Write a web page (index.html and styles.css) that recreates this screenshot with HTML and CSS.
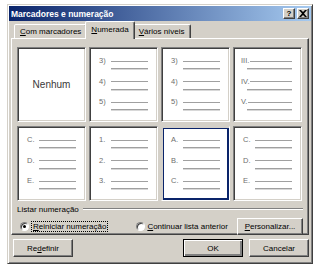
FILE: index.html
```html
<!DOCTYPE html>
<html lang="pt">
<head>
  <meta charset="UTF-8" />
  <title>Marcadores e numeração</title>
  <link rel="stylesheet" href="styles.css">
</head>
<body>

<div class="dialog">
  <div class="titlebar">
    <span class="title">Marcadores e numeração</span>
    <div class="tbtns">
      <span class="tbtn">?</span>
      <span class="tbtn">
        <svg width="8" height="7" viewBox="0 0 8 7"><path d="M0 0h2l2 2 2-2h2L5 3.5 8 7H6L4 5 2 7H0l3-3.5z" fill="#000"/></svg>
      </span>
    </div>
  </div>

  <div class="content">
    <div class="tabs">
      <div class="tab tab-first"><u>C</u>om marcadores</div>
      <div class="tab active"><u>N</u>umerada</div>
      <div class="tab"><u>V</u>ários níveis</div>
    </div>

    <div class="panel">
      <div class="grid">
        <div class="preview none">Nenhum</div>

        <div class="preview">
          <div class="item"><div class="r1"><span class="num">3)</span><span class="ln"></span></div><div class="ln2"></div></div>
          <div class="item"><div class="r1"><span class="num">4)</span><span class="ln"></span></div><div class="ln2"></div></div>
          <div class="item"><div class="r1"><span class="num">5)</span><span class="ln"></span></div><div class="ln2"></div></div>
        </div>

        <div class="preview">
          <div class="item"><div class="r1"><span class="num">3)</span><span class="ln"></span></div><div class="ln2"></div></div>
          <div class="item"><div class="r1"><span class="num">4)</span><span class="ln"></span></div><div class="ln2"></div></div>
          <div class="item"><div class="r1"><span class="num">5)</span><span class="ln"></span></div><div class="ln2"></div></div>
        </div>

        <div class="preview roman">
          <div class="item"><div class="r1"><span class="num">III.</span><span class="ln"></span></div><div class="ln2"></div></div>
          <div class="item"><div class="r1"><span class="num">IV.</span><span class="ln"></span></div><div class="ln2"></div></div>
          <div class="item"><div class="r1"><span class="num">V.</span><span class="ln"></span></div><div class="ln2"></div></div>
        </div>

        <div class="preview">
          <div class="item"><div class="r1"><span class="num">C.</span><span class="ln"></span></div><div class="ln2"></div></div>
          <div class="item"><div class="r1"><span class="num">D.</span><span class="ln"></span></div><div class="ln2"></div></div>
          <div class="item"><div class="r1"><span class="num">E.</span><span class="ln"></span></div><div class="ln2"></div></div>
        </div>

        <div class="preview">
          <div class="item"><div class="r1"><span class="num">1.</span><span class="ln"></span></div><div class="ln2"></div></div>
          <div class="item"><div class="r1"><span class="num">2.</span><span class="ln"></span></div><div class="ln2"></div></div>
          <div class="item"><div class="r1"><span class="num">3.</span><span class="ln"></span></div><div class="ln2"></div></div>
        </div>

        <div class="preview selected">
          <div class="item"><div class="r1"><span class="num">A.</span><span class="ln"></span></div><div class="ln2"></div></div>
          <div class="item"><div class="r1"><span class="num">B.</span><span class="ln"></span></div><div class="ln2"></div></div>
          <div class="item"><div class="r1"><span class="num">C.</span><span class="ln"></span></div><div class="ln2"></div></div>
        </div>

        <div class="preview">
          <div class="item"><div class="r1"><span class="num">C.</span><span class="ln"></span></div><div class="ln2"></div></div>
          <div class="item"><div class="r1"><span class="num">D.</span><span class="ln"></span></div><div class="ln2"></div></div>
          <div class="item"><div class="r1"><span class="num">E.</span><span class="ln"></span></div><div class="ln2"></div></div>
        </div>
      </div>

      <div class="group"><span>Listar numeração</span><span class="etch"></span></div>

      <div class="radios">
        <label class="radio"><span class="dot checked"></span><span class="focus"><u>R</u>einiciar numeração</span></label>
        <label class="radio radio2"><span class="dot"></span><span><u>C</u>ontinuar lista anterior</span></label>
        <button class="btn btn-custom"><u>P</u>ersonalizar...</button>
      </div>
    </div>

    <div class="footer">
      <button class="btn">Re<u>d</u>efinir</button>
      <div class="footer-right">
        <button class="btn default">OK</button>
        <button class="btn">Cancelar</button>
      </div>
    </div>
  </div>
</div>

</body>
</html>
```

FILE: styles.css
```css
body {
  margin: 0;
  background: #fff;
  font-family: 'Liberation Sans', Arial, sans-serif;
  font-size: 8px;
  color: #000;
}
u {
  text-decoration: underline;
  text-underline-offset: 1px;
}
.dialog {
  box-sizing: border-box;
  width: 306px;
  height: 260px;
  margin: 4px 0 0 7px;
  padding: 1px;
  background: #d4d0c8;
  border: 1px solid;
  border-color: #d4d0c8 #404040 #404040 #d4d0c8;
  box-shadow: inset 1px 1px #fff, inset -1px -1px #808080;
}
.titlebar {
  height: 15px;
  display: flex;
  align-items: center;
  justify-content: space-between;
  background: linear-gradient(to right, #0a246a, #a6caf0);
  padding: 0 2px 0 2px;
}
.title {
  color: #fff;
  font-weight: bold;
  font-size: 8.5px;
}
.tbtns {
  display: flex;
  gap: 2px;
}
.tbtn {
  box-sizing: border-box;
  width: 12px;
  height: 11px;
  display: flex;
  align-items: center;
  justify-content: center;
  background: #d4d0c8;
  border: 1px solid;
  border-color: #fff #404040 #404040 #fff;
  box-shadow: inset -1px -1px #808080;
  font-weight: bold;
  font-size: 8px;
  line-height: 1;
}
.content {
  padding: 0 2px 0 2px;
}
.tabs {
  display: flex;
  align-items: flex-end;
  height: 17px;
  padding-left: 3px;
  position: relative;
  z-index: 1;
}
.tab {
  box-sizing: border-box;
  height: 14px;
  padding: 2px 5px 0;
  border: 1px solid;
  border-bottom: none;
  border-color: #fff #404040 transparent #fff;
  box-shadow: inset -1px 0 #808080;
  border-radius: 2px 2px 0 0;
  background: #d4d0c8;
  white-space: nowrap;
}
.tab.active {
  height: 18px;
  margin: 0 -2px -1px;
  padding: 3px 5px 0;
  position: relative;
  z-index: 2;
}
.panel {
  box-sizing: border-box;
  height: 197px;
  padding: 8px 5px 0 5px;
  border: 1px solid;
  border-color: #fff #404040 #404040 #fff;
  box-shadow: inset -1px -1px #808080;
}
.grid {
  display: grid;
  grid-template-columns: repeat(4, 69px);
  grid-template-rows: 75px 75px;
  gap: 4px 3px;
}
.preview {
  box-sizing: border-box;
  background: #fff;
  border: 1px solid;
  border-color: #808080 #fff #fff #808080;
  box-shadow: inset 1px 1px #404040, inset -1px -1px #d4d0c8;
  padding: 9px 0 0 9px;
}
.preview.none {
  display: flex;
  align-items: center;
  justify-content: center;
  padding: 0;
  font-size: 10px;
  color: #3a3a3a;
}
.preview.selected {
  border-color: #d4d0c8 #fff #fff #d4d0c8;
  box-shadow: inset 1px 1px #d4d0c8, inset 0 0 0 2px #0a246a;
}
.item {
  height: 20.5px;
}
.r1 {
  display: flex;
  align-items: center;
  height: 8px;
  width: 49px;
}
.num {
  width: 12px;
  font-size: 7.5px;
  color: #6e6e6e;
  line-height: 8px;
}
.ln {
  flex: 1;
  height: 1px;
  background: #a0a0a0;
}
.ln2 {
  margin: 3px 0 0 12px;
  width: 37px;
  height: 1px;
  background: #a0a0a0;
  box-shadow: 0 1px #d8d8d8;
}
.roman {
  padding-left: 7px;
}
.roman .r1 {
  width: 51px;
}
.roman .num {
  width: auto;
  margin-right: 1px;
}
.roman .ln2 {
  margin-left: 6px;
  width: 45px;
}
.group {
  display: flex;
  align-items: center;
  height: 10px;
  margin-top: 3px;
  color: #000;
}
.etch {
  flex: 1;
  height: 0;
  border-top: 1px solid #808080;
  border-bottom: 1px solid #fff;
  margin-left: 4px;
}
.radios {
  display: flex;
  align-items: center;
  height: 17px;
  margin-top: 4px;
}
.radio {
  display: flex;
  align-items: center;
  gap: 2px;
  margin-left: 3px;
}
.radio2 {
  margin-left: 28px;
}
.dot {
  box-sizing: border-box;
  width: 9px;
  height: 9px;
  border-radius: 50%;
  background: #fff;
  border: 1px solid;
  border-color: #808080 #fff #fff #808080;
  box-shadow: inset 1px 1px #404040;
  display: flex;
  align-items: center;
  justify-content: center;
}
.dot.checked::after {
  content: "";
  width: 3px;
  height: 3px;
  border-radius: 50%;
  background: #000;
}
.focus {
  border: 1px dotted #000;
  padding: 0 1px;
}
.btn {
  box-sizing: border-box;
  font-family: 'Liberation Sans', Arial, sans-serif;
  font-size: 8px;
  color: #000;
  height: 18px;
  width: 60px;
  padding: 0;
  background: #d4d0c8;
  border: 1px solid;
  border-color: #fff #404040 #404040 #fff;
  box-shadow: inset -1px -1px #808080;
}
.btn-custom {
  margin-left: auto;
  width: 66px;
  height: 17px;
  margin-right: 0;
}
.btn.default {
  border: 1px solid #000;
  box-shadow: inset 1px 1px #fff, inset -2px -2px #808080;
}
.footer {
  display: flex;
  justify-content: space-between;
  margin-top: 4px;
  padding-left: 2px;
}
.footer-right {
  display: flex;
  gap: 6px;
}
```
